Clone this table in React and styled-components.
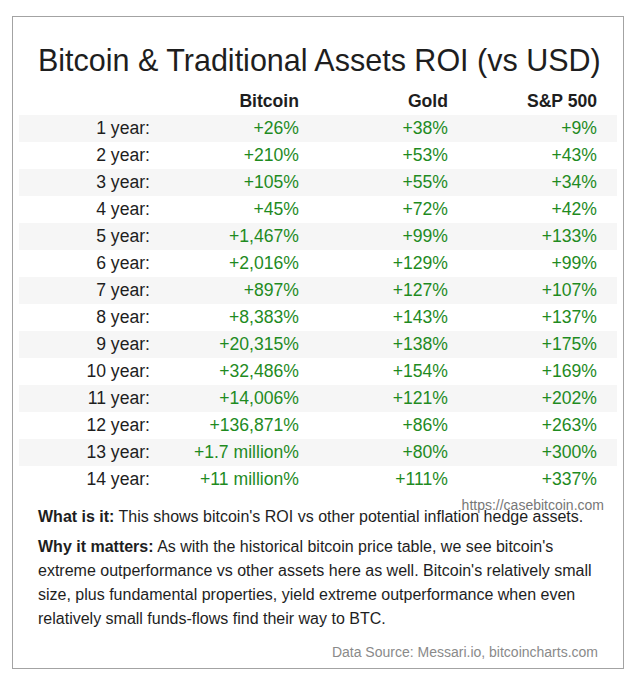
import styled, { createGlobalStyle } from 'styled-components';

const GlobalStyle = createGlobalStyle`
  html, body {
    margin: 0;
    padding: 0;
    background: #ffffff;
  }
  body {
    font-family: 'Liberation Sans', Arial, sans-serif;
    color: #222;
  }
`;

const Page = styled.div`
  padding: 16px 0 0 12px;
`;

const Card = styled.div`
  width: 612px;
  box-sizing: border-box;
  border: 1px solid #a3a3a3;
  padding: 25px 0 6px;
  background: #fff;
`;

const Title = styled.h1`
  margin: 0;
  padding-left: 25px;
  font-size: 30.5px;
  line-height: 36px;
  font-weight: 400;
  color: #1e1e1e;
  white-space: nowrap;
`;

const Table = styled.div`
  margin: 10px 6px 0;
`;

const Row = styled.div`
  display: grid;
  grid-template-columns: 131px 149px 149px 149px;
  padding-right: 20px;
  height: 27px;
  line-height: 27px;
  font-size: 17.6px;
  background: ${(p) => (p.$striped ? '#f6f6f6' : 'transparent')};
  font-weight: ${(p) => (p.$head ? 700 : 400)};
`;

const Cell = styled.div`
  text-align: right;
  white-space: nowrap;
  color: ${(p) => (p.$value ? '#1f8b1f' : '#1e1e1e')};
`;

const Notes = styled.div`
  position: relative;
  margin-top: 12px;
  padding: 0 25px;
  font-size: 16px;
  line-height: 24px;
  color: #1e1e1e;
`;

const Para = styled.p`
  margin: 0 0 6px;
  &:last-child {
    margin-bottom: 0;
  }
  strong {
    font-weight: 700;
  }
`;

// watermark sits over the first note line, as in the source image
const Watermark = styled.span`
  position: absolute;
  top: -8px;
  right: 19px;
  font-size: 14px;
  line-height: 16px;
  color: #777;
`;

const Source = styled.div`
  margin-top: 11px;
  padding-right: 25px;
  text-align: right;
  font-size: 14px;
  line-height: 20px;
  color: #8a8a8a;
`;

const rows = [
  ['+26%', '+38%', '+9%'],
  ['+210%', '+53%', '+43%'],
  ['+105%', '+55%', '+34%'],
  ['+45%', '+72%', '+42%'],
  ['+1,467%', '+99%', '+133%'],
  ['+2,016%', '+129%', '+99%'],
  ['+897%', '+127%', '+107%'],
  ['+8,383%', '+143%', '+137%'],
  ['+20,315%', '+138%', '+175%'],
  ['+32,486%', '+154%', '+169%'],
  ['+14,006%', '+121%', '+202%'],
  ['+136,871%', '+86%', '+263%'],
  ['+1.7 million%', '+80%', '+300%'],
  ['+11 million%', '+111%', '+337%'],
];

export default function App() {
  return (
    <Page>
      <GlobalStyle />
      <Card>
        <Title>Bitcoin &amp; Traditional Assets ROI (vs USD)</Title>
        <Table>
          <Row $head>
            <Cell />
            <Cell>Bitcoin</Cell>
            <Cell>Gold</Cell>
            <Cell>S&amp;P 500</Cell>
          </Row>
          {rows.map((r, i) => (
            <Row key={i} $striped={i % 2 === 0}>
              <Cell>{i + 1} year:</Cell>
              {r.map((v, j) => (
                <Cell key={j} $value>
                  {v}
                </Cell>
              ))}
            </Row>
          ))}
        </Table>
        <Notes>
          <Watermark>https://casebitcoin.com</Watermark>
          <Para>
            <strong>What is it:</strong> This shows bitcoin's ROI vs other potential
            inflation hedge assets.
          </Para>
          <Para>
            <strong>Why it matters:</strong> As with the historical bitcoin price table,
            we see bitcoin's extreme outperformance vs other assets here as well.
            Bitcoin's relatively small size, plus fundamental properties, yield extreme
            outperformance when even relatively small funds-flows find their way to BTC.
          </Para>
        </Notes>
        <Source>Data Source: Messari.io, bitcoincharts.com</Source>
      </Card>
    </Page>
  );
}
